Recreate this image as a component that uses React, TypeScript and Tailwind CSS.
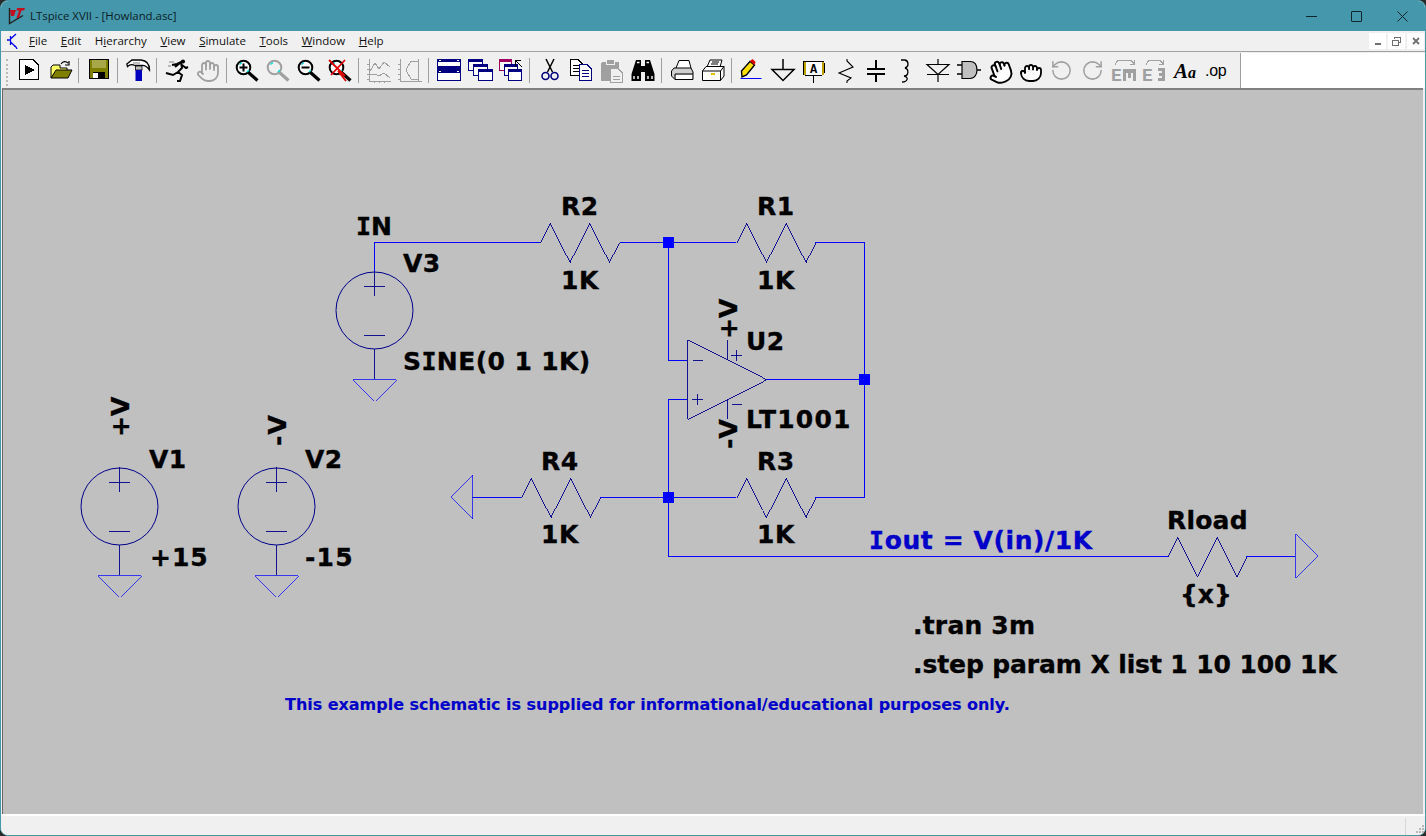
import React from "react";
import { Hand, Grab, RotateCcw, RotateCw } from "lucide-react";

const NAVY = "#000080";
const WIRE = "#0000ff";
const SYM = "#00008c";
const GREY = "#a0a0a0";

const Ic = ({ children, crisp }: { children: React.ReactNode; crisp?: boolean }) => (
  <svg viewBox="0 0 24 24" width="24" height="24" className="block overflow-visible" shapeRendering={crisp ? "crispEdges" : undefined}>
    {children}
  </svg>
);

const Btn = ({ children }: { children: React.ReactNode }) => (
  <div className="w-[31px] h-[24px] pl-[3px] shrink-0">{children}</div>
);

const Sep = () => (
  <div className="w-[8px] shrink-0 pl-[2px]">
    <div className="w-px h-[25px] -mt-px bg-[#a0a0a0]" />
  </div>
);

const Lens = ({ c, fill = "#fff" }: { c: string; fill?: string }) => (
  <>
    <circle cx="8.5" cy="8.5" r="6.8" fill={fill} stroke={c} strokeWidth="2" />
    <path d="M13.5 13.5 L22.5 21.5" stroke={c} strokeWidth="3.2" />
    <path d="M4.5 5.5 L7 3.5 M12 13 L14 11" stroke="#00e0e0" strokeWidth="1.4" />
  </>
);

const WinBox = ({ x, y, w, h, c = NAVY }: { x: number; y: number; w: number; h: number; c?: string }) => (
  <>
    <rect x={x + 0.5} y={y + 0.5} width={w} height={h} fill="#fff" stroke={c} />
    <rect x={x} y={y} width={w + 1} height={3} fill={c} />
  </>
);

const Doc = ({ x, y, c = "#000" }: { x: number; y: number; c?: string }) => (
  <>
    <path d={`M${x + 0.5} ${y + 0.5} H${x + 8} L${x + 12.5} ${y + 5} V${y + 16.5} H${x + 0.5} Z`} fill="#fff" stroke={c} />
    <path d={`M${x + 3} ${y + 6.5} H${x + 10} M${x + 3} ${y + 9.5} H${x + 10} M${x + 3} ${y + 12.5} H${x + 10}`} stroke={c} />
  </>
);

const icons: (React.ReactNode | null)[] = [
  // run
  <Ic key="run" crisp>
    <path d="M2.5 .5 H16 L21.5 6 V20.5 H2.5 Z" fill="#fff" stroke="#000" />
    <path d="M8 6 L18 11 L8 16 Z" fill="#000" />
  </Ic>,
  // open
  <Ic key="open">
    <path d="M3 19 V8 L5 6 H12 V9 H19 V12 H9 L3 19 Z" fill="#ffff66" stroke="#000" />
    <path d="M3 19 L8 11 H24 L20 19 Z" fill="#808000" stroke="#000" />
    <path d="M13 5 C15 2 18 2 20 4 M21 2 V6 H17" fill="none" stroke="#000" strokeWidth="1.2" />
  </Ic>,
  null,
  // save
  <Ic key="save" crisp>
    <rect x="2.5" y=".5" width="19" height="19" fill="#808000" stroke="#000" />
    <rect x="5" y="1" width="14" height="8" fill="#a8a848" />
    <rect x="6" y="13" width="12" height="6" fill="#000" />
    <rect x="6" y="14" width="5" height="5" fill="#fff" />
  </Ic>,
  null,
  // build hammer
  <Ic key="hammer">
    <path d="M.8 5 L6 1 H15 C20 1.5 23.5 5 23.5 11 C21 7.5 18.5 6 15.5 6.5 H9 C6 5 3.5 5.5 1.5 7.5 Z" fill="#fff" stroke="#000" strokeWidth="1.3" />
    <path d="M7 3 H14 V5 H7 Z" fill="#c0c0c0" />
    <rect x="9.5" y="7" width="6.5" height="4" fill="#c0c0c0" stroke="#000" strokeWidth=".8" />
    <rect x="9.5" y="11" width="6.5" height="11" fill="#0000c0" />
  </Ic>,
  null,
  // run man
  <Ic key="runner">
    <circle cx="18" cy="2.5" r="2" fill="#000" />
    <path d="M7 6 L12 5 L16 3 L17 9 L13 13 L8 16 L1 14 M13 13 L17 16 L15 22 L12 22 M17 6 L21 9 L23 8 M15 4 L10 8" fill="none" stroke="#000" strokeWidth="2" />
    <path d="M4 3 H9 M3 7 H6" stroke="#808080" />
  </Ic>,
  <div key="hand" className="text-[#a0a0a0]"><Hand size={24} strokeWidth={1.8} /></div>,
  null,
  <Ic key="zin">
    <Lens c="#000" />
    <path d="M4.5 8.5 H12.5 M8.5 4.5 V12.5" stroke="#000" strokeWidth="2" />
  </Ic>,
  <Ic key="zfit">
    <Lens c={GREY} fill="#f0f0f0" />
  </Ic>,
  <Ic key="zout">
    <Lens c="#000" />
    <path d="M4.5 8.5 H12.5" stroke="#000" strokeWidth="2" />
  </Ic>,
  <Ic key="zcan">
    <Lens c="#000" />
    <path d="M1 1 L17 17 M17 1 L3 16 M10 12 L18 22" stroke="#e00000" strokeWidth="1.8" />
  </Ic>,
  null,
  // waveform
  <Ic key="wave1" crisp>
    <path d="M2.5 0 V22.5 H24 M0 20 H2 M0 15 H2 M0 10 H2 M0 5 H2 M7 23 V24 M12 23 V24 M17 23 V24" stroke={GREY} fill="none" />
    <path d="M3 12 L8 4 L12 10 L17 3 L23 8 M3 16 L8 15 L12 17 L17 14 L23 19" stroke={GREY} fill="none" />
  </Ic>,
  <Ic key="wave2" crisp>
    <path d="M2.5 0 V22.5 H24 M0 20 H2 M0 15 H2 M0 10 H2 M0 5 H2" stroke={GREY} fill="none" />
    <path d="M8 11 L13 2 H20 V20 H13 L8 11 Z M20 0 V23" stroke={GREY} fill="none" />
  </Ic>,
  null,
  // windows
  <Ic key="tile" crisp>
    <rect x=".5" y=".5" width="23" height="10" fill="#fff" stroke={NAVY} />
    <rect x=".5" y="11.5" width="23" height="10" fill="#fff" stroke={NAVY} />
    <rect x="0" y="0" width="24" height="3" fill={NAVY} />
    <rect x="0" y="11" width="24" height="3" fill={NAVY} />
    <rect x="1" y="7" width="22" height="4" fill={NAVY} />
    <rect x="2" y="1" width="2" height="1" fill="#fff" />
    <rect x="20" y="1" width="2" height="1" fill="#fff" />
    <rect x="2" y="12" width="2" height="1" fill="#fff" />
    <rect x="20" y="12" width="2" height="1" fill="#fff" />
  </Ic>,
  <Ic key="casc" crisp>
    <WinBox x={0} y={0} w={14} h={11} />
    <WinBox x={5} y={5} w={14} h={11} />
    <WinBox x={10} y={10} w={14} h={11} />
  </Ic>,
  <Ic key="casc2" crisp>
    <WinBox x={0} y={0} w={12} h={11} c="#a00060" />
    <WinBox x={5} y={5} w={13} h={11} />
    <WinBox x={9} y={10} w={13} h={11} />
    <path d="M16 1 H22 M16.5 1 V7 M17 2 L23 8" stroke="#000" fill="none" />
  </Ic>,
  null,
  // scissors: blades up, rings down
  <Ic key="cut">
    <path d="M8 0 L14.5 13 M16 0 L9.5 13" stroke="#000" strokeWidth="1.5" fill="none" />
    <circle cx="7.5" cy="17" r="3.5" fill="none" stroke={NAVY} strokeWidth="1.6" />
    <circle cx="16.5" cy="17" r="3.5" fill="none" stroke={NAVY} strokeWidth="1.6" />
  </Ic>,
  <Ic key="copy" crisp>
    <Doc x={1} y={0} />
    <Doc x={10} y={5} c={NAVY} />
  </Ic>,
  <Ic key="paste" crisp>
    <rect x="1" y="3" width="18" height="19" rx="2" fill={GREY} />
    <rect x="6" y="0" width="8" height="5" fill={GREY} stroke="#f0f0f0" />
    <path d="M10.5 9.5 H18 L22.5 14 V23.5 H10.5 Z" fill="#f0f0f0" stroke={GREY} />
    <path d="M13 17 H20 M13 20 H20" stroke={GREY} />
  </Ic>,
  // binoculars
  <Ic key="binoc">
    <path d="M5 1 H10 V7 H14 V1 H19 L23.5 15 V22 H14 V13 H10 V22 H.5 V15 Z" fill="#000" />
    <path d="M6 3.5 H8.5 M15.5 3.5 H18 M3 17 V20 M7 17 V20 M17 17 V20 M21 17 V20" stroke="#fff" strokeWidth="1.4" />
  </Ic>,
  null,
  // printer
  <Ic key="print1">
    <path d="M6 9 L9 1.5 H19 L21 9" fill="#fff" stroke="#000" />
    <path d="M4 9 H21 L23 13 V20.5 H5 L1.5 17 V12 Z" fill="#d0d0d0" stroke="#000" />
    <path d="M5 15 H23 M5 15 V20.5" fill="none" stroke="#000" />
    <path d="M6 16 H22 V20 H6 Z" fill="#fff" />
  </Ic>,
  <Ic key="print2">
    <path d="M6 8 L9 1 H21 L19 8" fill="#fff" stroke="#000" />
    <path d="M11 3 H18 M10 5 H17" stroke="#000" />
    <path d="M1.5 12 L5 7.5 H23 V17 L19.5 21.5 H1.5 Z" fill="#fff" stroke="#000" />
    <path d="M1.5 12 H19.5 V21.5 M19.5 12 L23 7.5" fill="none" stroke="#000" />
    <rect x="10" y="14" width="4" height="2" fill="#e0c000" />
  </Ic>,
  null,
  // pencil
  <Ic key="pencil">
    <path d="M.5 19.5 H21.5" stroke="#0000ff" strokeWidth="1" />
    <path d="M2 18 L1.5 12 L10 2.5 L14.5 6 L6.5 16 Z" fill="#ffe000" stroke="#000" strokeWidth="1.4" />
    <path d="M10 2 L12.5 0 L15.5 3 L14.5 6 Z" fill="#e00000" />
  </Ic>,
  // ground
  <Ic key="gnd">
    <path d="M12 0 V10 M1 10.5 H23 L12 21.5 Z" fill="none" stroke="#000" strokeWidth="1.5" />
  </Ic>,
  // label
  <Ic key="label" crisp>
    <rect x="1" y="2" width="21" height="14" rx="2" fill="#fff" stroke="#000" />
    <rect x="1.5" y="2.5" width="2" height="13" fill="#c0a000" />
    <rect x="20" y="2.5" width="2" height="13" fill="#c0a000" />
    <text x="11.5" y="13.5" textAnchor="middle" className="font-['Liberation_Mono'] font-bold text-[12px]" fill="#000">A</text>
    <path d="M11.5 16 V24" stroke="#000" />
  </Ic>,
  // resistor
  <Ic key="res">
    <path d="M14 0 V2 L20 8 L6 14 L18 19 L14 22 V24" fill="none" stroke="#000" strokeWidth="1.1" />
  </Ic>,
  // cap
  <Ic key="cap" crisp>
    <path d="M12 1 V9 M12 15 V23" stroke="#000" strokeWidth="1.5" />
    <rect x="3" y="9" width="18" height="2" fill="#000" />
    <rect x="3" y="14" width="18" height="2" fill="#000" />
  </Ic>,
  // inductor
  <Ic key="ind">
    <path d="M5 1 H9 C13 2 13 8 9 9 C13 10 13 17 8 17 C13 18 12 23 6 23" fill="none" stroke="#000" strokeWidth="1.3" transform="translate(1 0)" />
  </Ic>,
  // diode
  <Ic key="dio">
    <path d="M12 0 V5 M1 5.5 H23 L12 15.5 Z M1 15.5 H23 M12 15 V23" fill="none" stroke="#000" strokeWidth="1.2" />
  </Ic>,
  // gate
  <Ic key="gate">
    <path d="M5 2.5 H13 C19 2.5 20 8 20 11 C20 15 18 19.5 13 19.5 H5 Z" fill="#c0c0c0" stroke="#000" strokeWidth="1.2" />
    <path d="M0 6 H5 M0 15 H5 M20 11 H24" stroke="#000" strokeWidth="1.3" />
  </Ic>,
  <div key="hand2" className="text-black -mx-px"><Hand size={26} strokeWidth={1.8} fill="#fff" className="rotate-[-20deg]" /></div>,
  <div key="fist" className="text-black"><Grab size={24} strokeWidth={1.8} fill="#fff" /></div>,
  <div key="undo" className="text-[#a0a0a0]"><RotateCcw size={23} strokeWidth={1.6} /></div>,
  <div key="redo" className="text-[#a0a0a0]"><RotateCw size={23} strokeWidth={1.6} /></div>,
  <Ic key="em" crisp>
    <text x="-1" y="22" fill={GREY} className="font-['Liberation_Mono'] font-bold text-[18px]">E</text>
    <path d="M10 10 H23 V22 H20 V14 H18 V19 H15 V14 H13 V22 H10 Z" transform="translate(1 0)" fill={GREY} />
    <path d="M3 6 L6 1 H19 L22 5 M22 1 V5 H18" fill="none" stroke={GREY} />
  </Ic>,
  <Ic key="e3" crisp>
    <text x="-1" y="22" fill={GREY} className="font-['Liberation_Mono'] font-bold text-[18px]">E</text>
    <path d="M15 9 H22 V22 H15 V19 H19 V17 H16 V14 H19 V12 H15 Z" fill={GREY} />
    <path d="M3 6 L6 1 H17 L20 5 M20 1 V5 H16" fill="none" stroke={GREY} />
  </Ic>,
  <div key="aa" className="font-['Liberation_Serif'] font-bold italic text-[21px] leading-[24px] text-black whitespace-nowrap">
    A<span className="text-[16px]">a</span>
  </div>,
  <div key="op" className="font-['Liberation_Sans'] text-[16px] leading-[23px] -tracking-[0.3px] text-black whitespace-nowrap">.op</div>,
];

const menus: [string, string, string][] = [
  ["", "F", "ile"],
  ["", "E", "dit"],
  ["H", "i", "erarchy"],
  ["", "V", "iew"],
  ["", "S", "imulate"],
  ["", "T", "ools"],
  ["", "W", "indow"],
  ["", "H", "elp"],
];

const Title = () => (
  <div className="h-[30px] shrink-0 flex items-center bg-[#4598ab]">
    <svg viewBox="0 0 18 18" width="18" height="18" className="ml-[7px] mt-[-1px]">
      <path d="M1.5 1 V16.5 L15 8.5" fill="none" stroke="#202020" strokeWidth="1.4" />
      <path d="M2 3 H8 L6 9 H3 Z M9 1 H17 L16 3.5 H13.5 L11 11 H8.5 L11 3.5 H8.5 Z" fill="#c01020" />
    </svg>
    <span className="ml-[4px] font-['Open_Sans'] text-[11.4px] text-[#0c2026]">LTspice XVII - [Howland.asc]</span>
    <div className="ml-auto flex items-center text-[#10262c]">
      <div className="w-[46px] h-[30px] flex items-center justify-center">
        <div className="w-[11px] h-px bg-[#10262c]" />
      </div>
      <div className="w-[45px] h-[30px] flex items-center justify-center">
        <div className="w-[11px] h-[11px] border border-[#10262c] rounded-[1px]" />
      </div>
      <div className="w-[46px] h-[30px] flex items-center justify-center">
        <svg viewBox="0 0 11 11" width="11" height="11">
          <path d="M.5 .5 L10.5 10.5 M10.5 .5 L.5 10.5" stroke="#10262c" fill="none" />
        </svg>
      </div>
    </div>
  </div>
);

const MdiBtn = ({ children }: { children: React.ReactNode }) => (
  <div className="w-[17px] h-[16px] bg-white flex items-center justify-center text-[#707070]">{children}</div>
);

const Menu = () => (
  <div className="h-[20px] shrink-0 flex items-center bg-[#f0f0f0]">
    <svg viewBox="0 0 12 16" width="12" height="16" className="ml-[6px]">
      <path d="M0 7 H3 M3.5 3 V12 M3.5 6 L9 1 M3.5 9 L9 14 M7 13 L9 14 L10 16" fill="none" stroke="#0000f0" strokeWidth="1.3" />
    </svg>
    <div className="ml-[10px] flex gap-[13.6px] font-['Open_Sans'] text-[11.5px] text-[#111]">
      {menus.map(([a, u, b]) => (
        <span key={a + u + b}>
          {a}
          <u className="underline-offset-1">{u}</u>
          {b}
        </span>
      ))}
    </div>
    <div className="ml-auto mr-px flex gap-[2px]">
      <MdiBtn>
        <div className="w-[6px] h-[2px] bg-[#707070] mt-[6px]" />
      </MdiBtn>
      <MdiBtn>
        <svg viewBox="0 0 9 9" width="9" height="9" shapeRendering="crispEdges">
          <path d="M2.5 2 V.5 H8.5 V5.5 H6.5 M.5 3.5 H6.5 V8.5 H.5 Z M.5 3 H6.5" fill="none" stroke="#707070" />
        </svg>
      </MdiBtn>
      <MdiBtn>
        <svg viewBox="0 0 8 8" width="8" height="8">
          <path d="M1 1 L7 7 M7 1 L1 7" stroke="#707070" strokeWidth="1.8" />
        </svg>
      </MdiBtn>
    </div>
  </div>
);

const Toolbar = () => (
  <div className="h-[37px] shrink-0 flex bg-[#f0f0f0] border-t border-[#a0a0a0]">
    <div className="flex flex-1 pt-[7px] pl-[5px]">
      <div className="w-[2px] h-[27px] mr-[6px] border-l-2 border-dotted border-[#b8b8b8]" />
      {icons.map((ic, i) => (ic === null ? <Sep key={i} /> : <Btn key={i}>{ic}</Btn>))}
    </div>
    <div className="w-[185px] mt-px bg-white border-l border-[#a0a0a0] shrink-0" />
  </div>
);

const Txt = ({ x, y, s, fill = "#000", size = 25, track = 0.5, rot }: { x: number; y: number; s: string; fill?: string; size?: number; track?: number; rot?: boolean }) => (
  <text
    x={x}
    y={y}
    fill={fill}
    stroke={fill}
    strokeWidth={size > 20 ? 0.35 : 0.1}
    fontSize={size}
    letterSpacing={track}
    className="font-['DejaVu_Sans'] font-bold"
    transform={rot ? `rotate(-90 ${x} ${y})` : undefined}
  >
    {s.split(/(I)/).map((p, i) =>
      p === "I" ? (
        <tspan key={i} className="font-['DejaVu_Sans_Mono']">I</tspan>
      ) : (
        <tspan key={i}>{p}</tspan>
      ),
    )}
  </text>
);

// thin strokes keep aliased diagonals one pixel wide
const Wire = ({ d }: { d: string }) => <path d={d} fill="none" stroke={WIRE} />;
const Tri = ({ d }: { d: string }) => <path d={d} fill="none" stroke={WIRE} strokeWidth="0.72" />;
const Sym = ({ d }: { d: string }) => <path d={d} fill="none" stroke={SYM} strokeWidth="0.9" />;

const Res = ({ x, y }: { x: number; y: number }) => (
  <Sym d={`M${x} ${y} L${x + 10} ${y - 20} L${x + 30} ${y + 20} L${x + 49.5} ${y - 20} L${x + 69.5} ${y + 20} L${x + 79} ${y}`} />
);

const Junction = ({ x, y }: { x: number; y: number }) => <rect x={x - 5} y={y - 5} width="11" height="11" fill={WIRE} />;

const Source = ({ x, y }: { x: number; y: number }) => (
  <>
    <circle cx={x + 0.5} cy={y + 0.5} r="38.5" fill="none" stroke={SYM} shapeRendering="auto" />
    <Sym d={`M${x + 0.5} ${y - 39} V${y - 14} M${x - 10} ${y - 23.5} H${x + 11} M${x - 10} ${y + 25.5} H${x + 11} M${x + 0.5} ${y + 39} V${y + 69}`} />
    <Tri d={`M${x - 21} ${y + 69.5} H${x + 22} L${x + 0.5} ${y + 91} Z`} />
  </>
);

const Schematic = () => (
  <svg viewBox="3 90 1420 724" className="block w-[1420px] h-[724px]" shapeRendering="crispEdges">
    {/* wires */}
    <Wire d="M374.5 271 V242.5 H540 M620 242.5 H736 M815 242.5 H864.5 V497.5 H815 M736 497.5 H600 M521 497.5 H472" />
    <Wire d="M668.5 242.5 V360.5 H687 M687 399.5 H668.5 V556.5 H1168 M1246 556.5 H1295 M767 379.5 H864.5" />
    <Res x={540} y={242.5} />
    <Res x={736.5} y={242.5} />
    <Res x={736.5} y={497.5} />
    <Res x={521} y={497.5} />
    <Res x={1167.5} y={556.5} />
    <Junction x={668} y={242} />
    <Junction x={864} y={379} />
    <Junction x={668} y={497} />
    {/* op amp */}
    <Sym d="M687.5 340 L766.5 379.5 L687.5 419 Z M693 360.5 H703 M692 399.5 H703 M697.5 394 V405 M727.5 340 V360 M727.5 399 V419 M731 355.5 H742 M736.5 350 V361 M732 404.5 H742" />
    {/* sources */}
    <Source x={374} y={310} />
    <Source x={119} y={506} />
    <Source x={276} y={506} />
    {/* ports */}
    <Tri d="M472.5 475 V519 L450.5 497 Z" />
    <Tri d="M1295.5 534 V578 L1317.5 556 Z" />
    {/* labels */}
    <Txt x={356} y={235} s="IN" track={0} />
    <Txt x={403} y={272} s="V3" />
    <Txt x={561} y={215} s="R2" />
    <Txt x={561} y={289} s="1K" />
    <Txt x={403} y={370} s="SINE(0 1 1K)" track={0.4} />
    <Txt x={757} y={215} s="R1" />
    <Txt x={757} y={289} s="1K" />
    <Txt x={746} y={350} s="U2" />
    <Txt x={746} y={428} s="LT1001" track={1.2} />
    <Txt x={737} y={339} s="+V" rot track={0} />
    <Txt x={737} y={449} s="-V" rot track={2} />
    <Txt x={129} y={437} s="+V" rot track={0} />
    <Txt x={286} y={446} s="-V" rot track={3} />
    <Txt x={149} y={468} s="V1" />
    <Txt x={305} y={468} s="V2" />
    <Txt x={150} y={566} s="+15" track={1} />
    <Txt x={305} y={566} s="-15" track={1.2} />
    <Txt x={541} y={470} s="R4" />
    <Txt x={541} y={543} s="1K" />
    <Txt x={757} y={470} s="R3" />
    <Txt x={757} y={543} s="1K" />
    <Txt x={869} y={549} s="Iout = V(in)/1K" fill="#0000c8" track={0.6} />
    <Txt x={1167} y={529} s="Rload" track={0.2} />
    <Txt x={1180} y={603} s="{x}" track={0} />
    <Txt x={913} y={634} s=".tran 3m" track={0.2} />
    <Txt x={913} y={673} s=".step param X list 1 10 100 1K" track={-0.1} />
    <Txt x={285} y={710} s="This example schematic is supplied for informational/educational purposes only." fill="#0000c8" size={16} track={-0.03} />
  </svg>
);

const Status = () => (
  <div className="h-[21px] shrink-0 bg-[#f0f0f0] border-t-2 border-white flex justify-end">
    <div className="w-[20px] border-l border-[#d8d8d8] mt-[2px] relative">
      <svg viewBox="0 0 10 10" width="10" height="10" className="absolute right-0 bottom-[1px]" shapeRendering="crispEdges">
        <path d="M7 1 H9 V3 H7 Z M4 4 H6 V6 H4 Z M7 4 H9 V6 H7 Z M1 7 H3 V9 H1 Z M4 7 H6 V9 H4 Z M7 7 H9 V9 H7 Z" fill="#b8b8b8" />
      </svg>
    </div>
  </div>
);

export default function App() {
  return (
    <div className="w-[1426px] h-[836px] bg-[#2a2a2a] overflow-hidden">
      <div className="h-full flex flex-col rounded-[8px] overflow-hidden border border-[#4598ab] bg-[#f0f0f0]">
        <Title />
        <Menu />
        <Toolbar />
        <div className="flex-1 flex bg-[#f0f0f0] pl-px pr-[2px] min-h-0">
          <div className="flex-1 border-l border-t-2 border-[#696969] border-t-[#808080] bg-[#c0c0c0]">
            <Schematic />
          </div>
        </div>
        <Status />
      </div>
    </div>
  );
}
